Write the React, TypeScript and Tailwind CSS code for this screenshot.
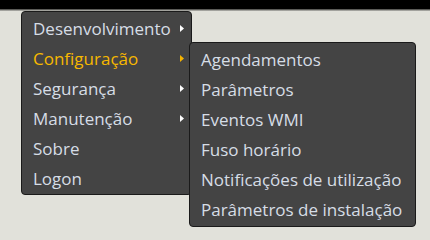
import React from "react";

const Arrow = ({ active }: { active?: boolean }) => (
  <svg width="4" height="7" viewBox="0 0 4 7" className="shrink-0">
    <polygon points="0,0 4,3.5 0,7" fill={active ? "#f6b400" : "#ffffff"} />
  </svg>
);

const main = [
  { label: "Desenvolvimento", sub: true },
  { label: "Configuração", sub: true, active: true },
  { label: "Segurança", sub: true },
  { label: "Manutenção", sub: true },
  { label: "Sobre" },
  { label: "Logon" },
];

const subItems = [
  "Agendamentos",
  "Parâmetros",
  "Eventos WMI",
  "Fuso horário",
  "Notificações de utilização",
  "Parâmetros de instalação",
];

export default function App() {
  return (
    <div
      className="relative w-[430px] h-[240px] bg-[#e1e1da] overflow-hidden"
      style={{ fontFamily: '"Open Sans", "Noto Sans", sans-serif' }}
    >
      <div className="h-[9px] bg-black" />
      <div className="h-[2px] bg-gradient-to-b from-[#3a3a38] to-[#c8c8c2]" />

      <div className="absolute left-[21px] top-[11px] w-[171px] h-[184px] bg-[#444444] border border-[#1a1a1a] rounded-[4px] py-px">
        {main.map((m) => (
          <div
            key={m.label}
            className="flex items-center justify-between h-[30px] pl-[11px] pr-[7px]"
          >
            <span
              className={
                "text-[17px] leading-none " +
                (m.active ? "text-[#f7b800]" : "text-[#d6dde6]")
              }
            >
              {m.label}
            </span>
            {m.sub && <Arrow active={m.active} />}
          </div>
        ))}
      </div>

      <div className="absolute left-[189px] top-[42px] w-[227px] h-[185px] bg-[#444444] border border-[#1a1a1a] rounded-[4px] py-px">
        {subItems.map((s) => (
          <div key={s} className="flex items-center h-[30px] pl-[11px]">
            <span className="text-[17px] leading-none text-[#d6dde6] whitespace-nowrap">
              {s}
            </span>
          </div>
        ))}
      </div>
    </div>
  );
}
